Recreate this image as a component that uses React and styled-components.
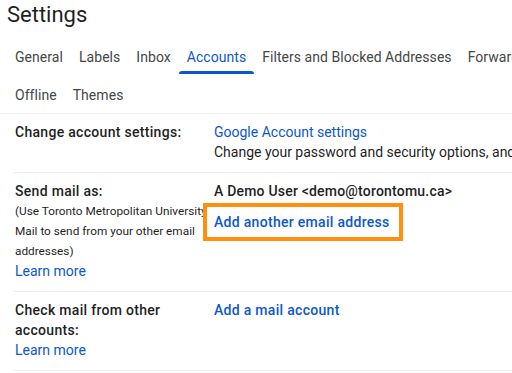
import styled, { createGlobalStyle } from 'styled-components';

const GlobalStyle = createGlobalStyle`
  html, body {
    margin: 0;
    padding: 0;
    background: #ffffff;
    overflow: hidden;
  }

  body {
    font-family: Roboto, "Liberation Sans", Arial, sans-serif;
    color: #1f1f1f;
  }
`;

const Page = styled.div`
  width: 512px;
  height: 373px;
  overflow: hidden;
  background: #fff;
`;

const PageTitle = styled.h1`
  margin: 0;
  padding: 0 0 0 7px;
  height: 37px;
  font-size: 22px;
  font-weight: 400;
  line-height: 30px;
  color: #1f1f1f;
  white-space: nowrap;
`;

const TabBar = styled.nav`
  display: flex;
  flex-wrap: wrap;
  padding-left: 7px;
  border-bottom: 1px solid #eef0f2;
  width: 660px;
`;

const Tab = styled.div`
  position: relative;
  height: 38px;
  padding: 2px 8px 0;
  box-sizing: border-box;
  display: flex;
  align-items: center;
  font-size: 14px;
  letter-spacing: 0.05px;
  color: ${({ $active }) => ($active ? '#0b57d0' : '#444746')};
  white-space: nowrap;

  &::after {
    content: '';
    display: ${({ $active }) => ($active ? 'block' : 'none')};
    position: absolute;
    left: 0;
    right: 0;
    bottom: 1px;
    height: 3px;
    border-radius: 3px 3px 0 0;
    background: #0b57d0;
  }
`;

const Sections = styled.div`
  margin-left: 14px;
`;

const SettingRow = styled.section`
  display: grid;
  grid-template-columns: 200px 1fr;
  padding: 8px 0 10px;
  border-bottom: 1px solid #ececec;
`;

const LabelCell = styled.div`
  padding-left: 1px;
  font-size: 14px;
  line-height: 20px;
`;

const LabelTitle = styled.div`
  font-weight: 500;
  letter-spacing: 0.3px;
  color: #1f1f1f;
  white-space: nowrap;
`;

const LabelNote = styled.div`
  font-size: 11.8px;
  line-height: 20px;
  color: #1f1f1f;
  white-space: nowrap;
`;

const ValueCell = styled.div`
  font-size: 14px;
  line-height: 20px;
  white-space: nowrap;
`;

const Link = styled.a`
  display: block;
  color: #0b57d0;
  text-decoration: none;
  font-weight: ${({ $strong }) => ($strong ? 500 : 400)};
  letter-spacing: ${({ $strong }) => ($strong ? '0.3px' : '0')};
  cursor: pointer;
`;

const PlainText = styled.div`
  color: #1f1f1f;
  font-weight: ${({ $strong }) => ($strong ? 500 : 400)};
  letter-spacing: ${({ $strong }) => ($strong ? '0.2px' : '0')};
`;

const Highlight = styled.div`
  display: inline-block;
  margin: 2px 0 0 -11px;
  padding: 5px 9px 5px 7px;
  border: 4px solid #ff8f0f;
`;

export default function App() {
  const tabs = [
    'General',
    'Labels',
    'Inbox',
    'Accounts',
    'Filters and Blocked Addresses',
    'Forwarding and POP/IMAP',
    'Offline',
    'Themes'
  ];

  return (
    <>
      <GlobalStyle />
      <Page>
        <PageTitle>Settings</PageTitle>
        <TabBar>
          {tabs.map((tab) => (
            <Tab key={tab} $active={tab === 'Accounts'}>
              {tab}
            </Tab>
          ))}
        </TabBar>
        <Sections>
          <SettingRow>
            <LabelCell>
              <LabelTitle>Change account settings:</LabelTitle>
            </LabelCell>
            <ValueCell>
              <Link>Google Account settings</Link>
              <PlainText>Change your password and security options, and access other Google services.</PlainText>
            </ValueCell>
          </SettingRow>
          <SettingRow>
            <LabelCell>
              <LabelTitle>Send mail as:</LabelTitle>
              <LabelNote>(Use Toronto Metropolitan University</LabelNote>
              <LabelNote>Mail to send from your other email</LabelNote>
              <LabelNote>addresses)</LabelNote>
              <Link>Learn more</Link>
            </LabelCell>
            <ValueCell>
              <PlainText $strong>A Demo User &lt;demo@torontomu.ca&gt;</PlainText>
              <Highlight>
                <Link $strong>Add another email address</Link>
              </Highlight>
            </ValueCell>
          </SettingRow>
          <SettingRow>
            <LabelCell>
              <LabelTitle>Check mail from other</LabelTitle>
              <LabelTitle>accounts:</LabelTitle>
              <Link>Learn more</Link>
            </LabelCell>
            <ValueCell>
              <Link $strong>Add a mail account</Link>
            </ValueCell>
          </SettingRow>
        </Sections>
      </Page>
    </>
  );
}
